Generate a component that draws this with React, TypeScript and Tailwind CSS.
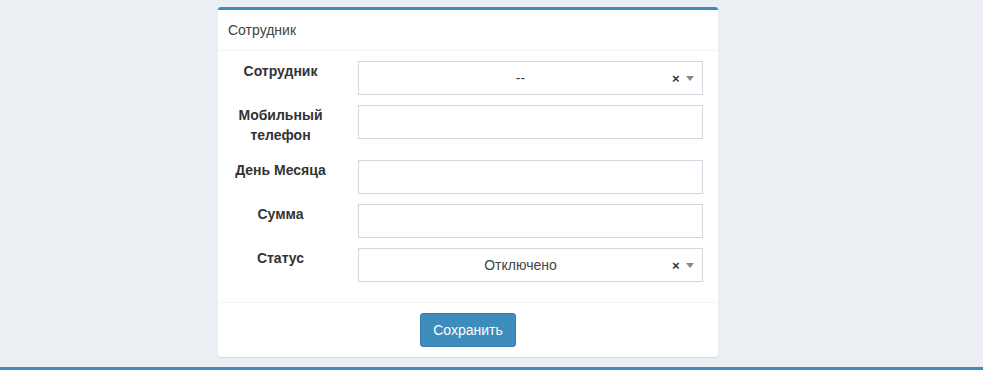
export default function App() {
  const SelectBox = ({ value }: { value: string }) => (
    <div className="relative h-[34px] w-[345px] border border-[#d2d6de] bg-white">
      <div className="flex h-full items-center justify-center pl-[12px] pr-[32px] text-[14px] text-[#444]">
        {value}
      </div>
      <span className="absolute left-[313px] top-[7px] text-[13px] font-bold leading-[20px] text-[#333]">×</span>
      <span className="absolute left-[327px] top-[14px] h-0 w-0 border-x-[4px] border-t-[5px] border-x-transparent border-t-[#888]"></span>
    </div>
  );

  const TextBox = () => <div className="h-[34px] w-[345px] border border-[#d2d6de] bg-white"></div>;

  const rows: { label: string; select?: string }[] = [
    { label: "Сотрудник", select: "--" },
    { label: "Мобильный телефон" },
    { label: "День Месяца" },
    { label: "Сумма" },
    { label: "Статус", select: "Отключено" },
  ];

  return (
    <div
      className="min-h-[370px] w-full bg-[#ecf0f5] pt-[7px]"
      style={{ fontFamily: '"Liberation Sans", Arial, sans-serif' }}
    >
      <div className="ml-[218px] w-[500px] rounded-[3px] border-t-[3px] border-[#3c8dbc] bg-white shadow-[0_1px_1px_rgba(0,0,0,0.1)]">
        <div className="border-b border-[#f4f4f4] px-[10px] py-[10px] text-[14px] leading-[20px] text-[#444]">
          Сотрудник
        </div>

        <div className="px-[10px] pt-[10px] pb-[10px]">
          {rows.map((row) => (
            <div key={row.label} className="mb-[10px] flex items-start">
              <label className="mb-[5px] w-[105px] text-center text-[14px] font-bold leading-[20px] text-[#333]">
                {row.label}
              </label>
              <div className="ml-[25px]">{row.select ? <SelectBox value={row.select} /> : <TextBox />}</div>
            </div>
          ))}
        </div>

        <div className="flex justify-center border-t border-[#f4f4f4] p-[10px]">
          <button className="h-[34px] rounded-[3px] border border-[#367fa9] bg-[#3c8dbc] px-[12px] text-[14px] text-white">
            Сохранить
          </button>
        </div>
      </div>

      <div className="mt-[10px] h-[3px] w-full bg-[#3c8dbc]"></div>
    </div>
  );
}
